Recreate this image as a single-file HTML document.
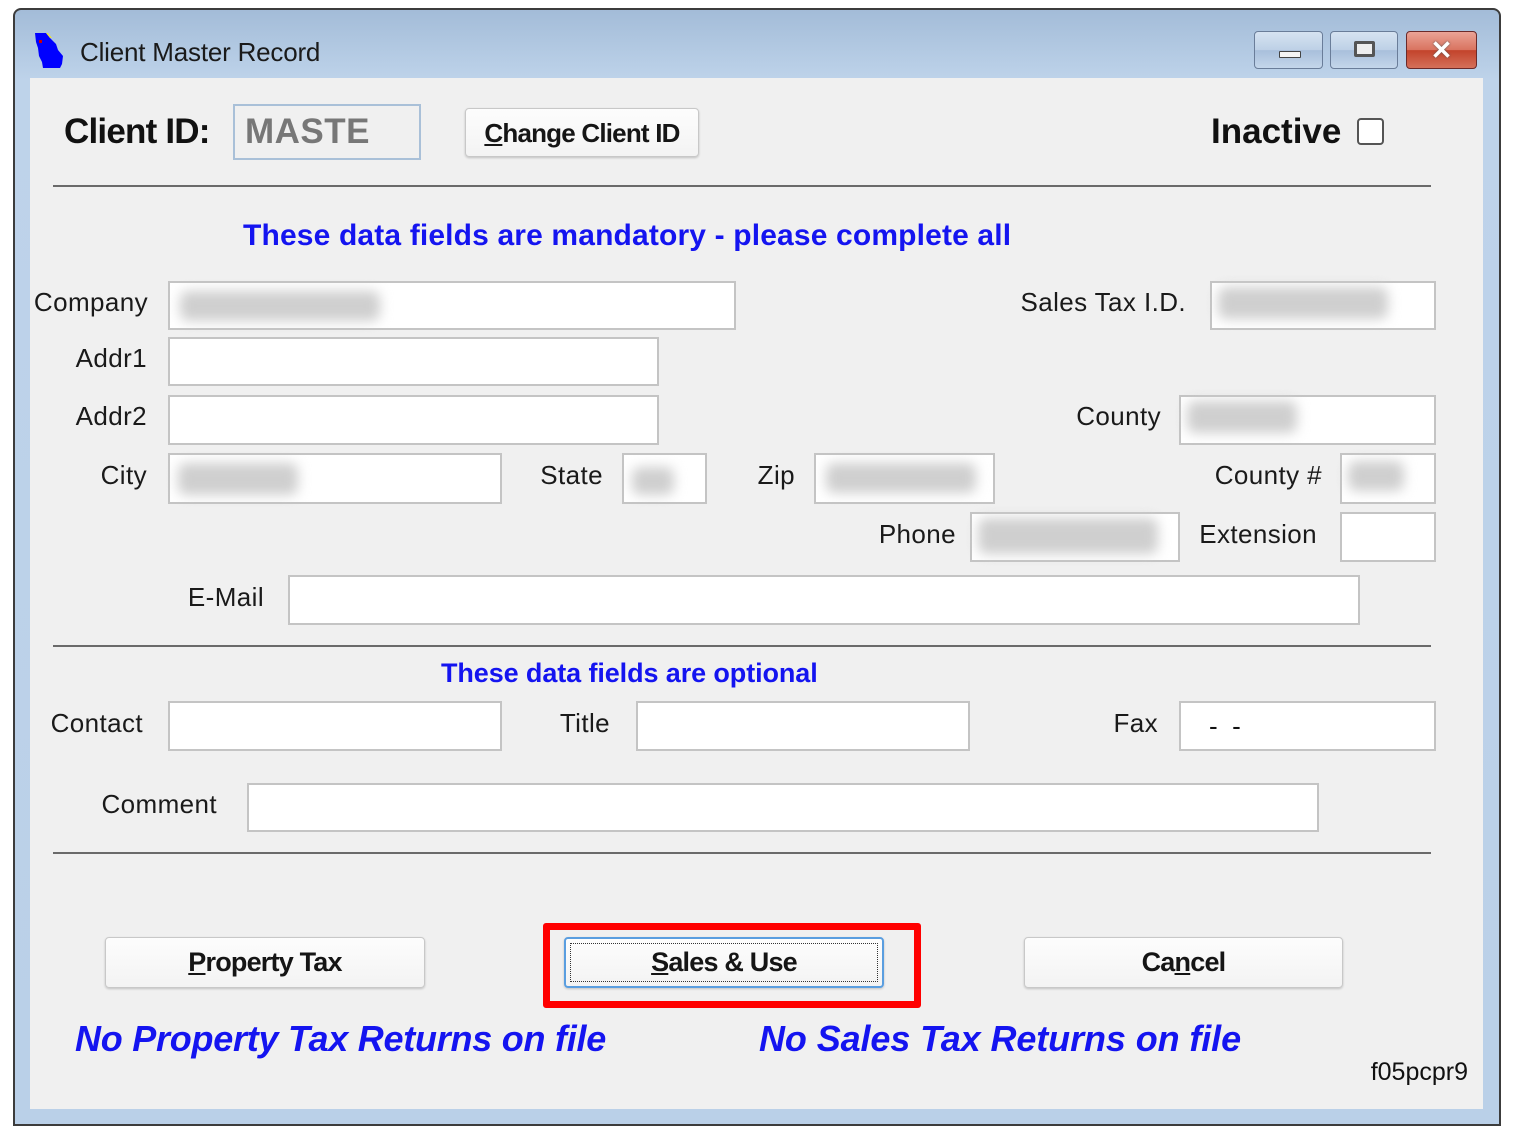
<!DOCTYPE html>
<html><head><meta charset="utf-8"><style>
*{margin:0;padding:0;box-sizing:border-box}
body{width:1516px;height:1132px;background:#fff;position:relative;overflow:hidden;font-family:"Liberation Sans",Arial,sans-serif;color:#111}
.abs{position:absolute}
.frame{left:13px;top:8px;width:1488px;height:1118px;border:2px solid #3c3c3c;border-radius:8px 8px 0 0;background:linear-gradient(#a3bcd8,#bed3ea 70px,#bad0e8);}
.client{left:30px;top:78px;width:1453px;height:1031px;background:#f0f0f0;}
.title{left:80px;top:36px;font-size:26px;color:#1a1a1a;line-height:32px;letter-spacing:-0.2px}
.lbl{position:absolute;font-size:26px;line-height:30px;text-align:right;white-space:nowrap;letter-spacing:0.4px;color:#1a1a1a}
.in{position:absolute;background:#fff;border:2px solid #c4c4c4}
.bl{position:absolute;background:#cfcfcf;filter:blur(6px);border-radius:8px}
.hr{position:absolute;left:53px;width:1378px;height:2px;background:#6a6a6a}
.btn{position:absolute;background:linear-gradient(#fdfdfd,#f3f3f3);border:1px solid #c8c8c8;border-radius:4px;box-shadow:0 1px 2px rgba(0,0,0,.2);font-size:27px;font-weight:bold;text-align:center;letter-spacing:-0.8px;line-height:49px;color:#151515}
.blue{position:absolute;color:#1414f0;font-weight:bold;white-space:nowrap}
.wb{position:absolute;top:31px;height:38px;border:1px solid #6a7d99;border-radius:4px;background:linear-gradient(#d6e3f1 0,#bdd0e6 50%,#a8bfdb 51%,#c4d6ea 100%)}
</style></head><body>
<div class="abs frame"></div>
<svg class="abs" style="left:30px;top:30px" width="40" height="42" viewBox="0 0 40 42"><polygon points="5,3 16,3 20,8 26,14 28,20 33,26 32,34 30,38 13,38 12,32 9,26 8,18 6,12" fill="#0000ff"/><polygon points="16,3 18,3 22,8 20,8" fill="#e8e040"/><rect x="9" y="10" width="3" height="3" fill="#c00"/></svg>
<div class="abs title">Client Master Record</div>
<div class="wb" style="left:1254px;width:69px"><div class="abs" style="left:24px;top:19px;width:22px;height:7px;border:1px solid #444;background:#f4f4f4;border-radius:1px"></div></div>
<div class="wb" style="left:1330px;width:68px"><div class="abs" style="left:23px;top:9px;width:21px;height:16px;border:3px solid #555;background:#eee;border-radius:2px"></div></div>
<div class="wb" style="left:1406px;width:71px;border-color:#6b2a2a;background:linear-gradient(#eba396 0,#d9735f 50%,#c3432b 51%,#d4705a 100%)"><div class="abs" style="left:0;top:0;width:100%;text-align:center;font-size:26px;font-weight:bold;color:#fff;line-height:36px;text-shadow:0 0 2px #555">✕</div></div>
<div class="abs client"></div>

<div class="abs" style="left:64px;top:112px;font-size:35px;font-weight:bold;letter-spacing:-0.8px;line-height:40px">Client ID:</div>
<div class="abs" style="left:233px;top:104px;width:188px;height:56px;border:2px solid #a9c0d8;background:#f0f0f0;font-size:35px;font-weight:bold;color:#777;padding-left:10px;line-height:52px;letter-spacing:0.5px">MASTE</div>
<div class="btn" style="left:465px;top:108px;width:234px;height:49px;font-size:26px;font-weight:bold"><u>C</u>hange Client ID</div>
<div class="abs" style="left:1211px;top:112px;font-size:35px;font-weight:bold;letter-spacing:0px;line-height:40px">Inactive</div>
<div class="abs" style="left:1357px;top:118px;width:27px;height:27px;border:2px solid #555;border-radius:4px;background:#fff"></div>
<div class="hr" style="top:185px"></div>

<div class="blue" style="left:243px;top:219px;font-size:30px;line-height:34px;letter-spacing:0.15px">These data fields are mandatory - please complete all</div>

<div class="lbl" style="left:0;width:148px;top:287px">Company</div>
<div class="in" style="left:168px;top:281px;width:568px;height:49px"><div class="bl" style="left:10px;top:8px;width:200px;height:30px"></div></div>
<div class="lbl" style="left:900px;width:286px;top:287px">Sales Tax I.D.</div>
<div class="in" style="left:1210px;top:281px;width:226px;height:49px"><div class="bl" style="left:6px;top:4px;width:170px;height:32px"></div></div>

<div class="lbl" style="left:0;width:147px;top:343px">Addr1</div>
<div class="in" style="left:168px;top:337px;width:491px;height:49px"></div>
<div class="lbl" style="left:0;width:147px;top:401px">Addr2</div>
<div class="in" style="left:168px;top:395px;width:491px;height:50px"></div>
<div class="lbl" style="left:900px;width:261px;top:401px">County</div>
<div class="in" style="left:1179px;top:395px;width:257px;height:50px"><div class="bl" style="left:6px;top:4px;width:110px;height:32px"></div></div>

<div class="lbl" style="left:0;width:147px;top:460px">City</div>
<div class="in" style="left:168px;top:453px;width:334px;height:51px"><div class="bl" style="left:8px;top:8px;width:120px;height:32px"></div></div>
<div class="lbl" style="left:500px;width:103px;top:460px">State</div>
<div class="in" style="left:622px;top:453px;width:85px;height:51px"><div class="bl" style="left:8px;top:12px;width:42px;height:28px"></div></div>
<div class="lbl" style="left:700px;width:95px;top:460px">Zip</div>
<div class="in" style="left:814px;top:453px;width:181px;height:51px"><div class="bl" style="left:10px;top:8px;width:150px;height:30px"></div></div>
<div class="lbl" style="left:1100px;width:222px;top:460px">County #</div>
<div class="in" style="left:1340px;top:453px;width:96px;height:51px"><div class="bl" style="left:6px;top:6px;width:56px;height:30px"></div></div>

<div class="lbl" style="left:800px;width:156px;top:519px">Phone</div>
<div class="in" style="left:970px;top:512px;width:210px;height:50px"><div class="bl" style="left:6px;top:4px;width:180px;height:36px"></div></div>
<div class="lbl" style="left:1100px;width:217px;top:519px">Extension</div>
<div class="in" style="left:1340px;top:512px;width:96px;height:50px"></div>

<div class="lbl" style="left:100px;width:164px;top:582px">E-Mail</div>
<div class="in" style="left:288px;top:575px;width:1072px;height:50px"></div>
<div class="hr" style="top:645px"></div>

<div class="blue" style="left:441px;top:657px;font-size:27px;line-height:32px;letter-spacing:-0.1px">These data fields are optional</div>

<div class="lbl" style="left:0;width:143px;top:708px">Contact</div>
<div class="in" style="left:168px;top:701px;width:334px;height:50px"></div>
<div class="lbl" style="left:500px;width:110px;top:708px">Title</div>
<div class="in" style="left:636px;top:701px;width:334px;height:50px"></div>
<div class="lbl" style="left:1000px;width:158px;top:708px">Fax</div>
<div class="in" style="left:1179px;top:701px;width:257px;height:50px"><div class="abs" style="left:28px;top:8px;font-size:26px;line-height:30px">-&nbsp;&nbsp;-</div></div>

<div class="lbl" style="left:0;width:217px;top:789px">Comment</div>
<div class="in" style="left:247px;top:783px;width:1072px;height:49px"></div>
<div class="hr" style="top:852px"></div>

<div class="btn" style="left:105px;top:937px;width:320px;height:51px"><u>P</u>roperty Tax</div>
<div class="abs" style="left:543px;top:923px;width:378px;height:85px;border:7px solid #ff0000;border-radius:3px"></div>
<div class="btn" style="left:564px;top:937px;width:320px;height:51px;border:2px solid #5a9ee0;line-height:47px"><div class="abs" style="left:4px;top:4px;right:4px;bottom:4px;border:1px dotted #333"></div><span style="position:relative"><u>S</u>ales &amp; Use</span></div>
<div class="btn" style="left:1024px;top:937px;width:319px;height:51px">Ca<u>n</u>cel</div>

<div class="blue" style="left:75px;top:1019px;font-size:36px;line-height:40px;font-style:italic;letter-spacing:-0.25px">No Property Tax Returns on file</div>
<div class="blue" style="left:759px;top:1019px;font-size:36px;line-height:40px;font-style:italic;letter-spacing:-0.1px">No Sales Tax Returns on file</div>
<div class="abs" style="left:1300px;width:168px;text-align:right;top:1057px;font-size:25px;line-height:30px;letter-spacing:0px">f05pcpr9</div>
</body></html>
